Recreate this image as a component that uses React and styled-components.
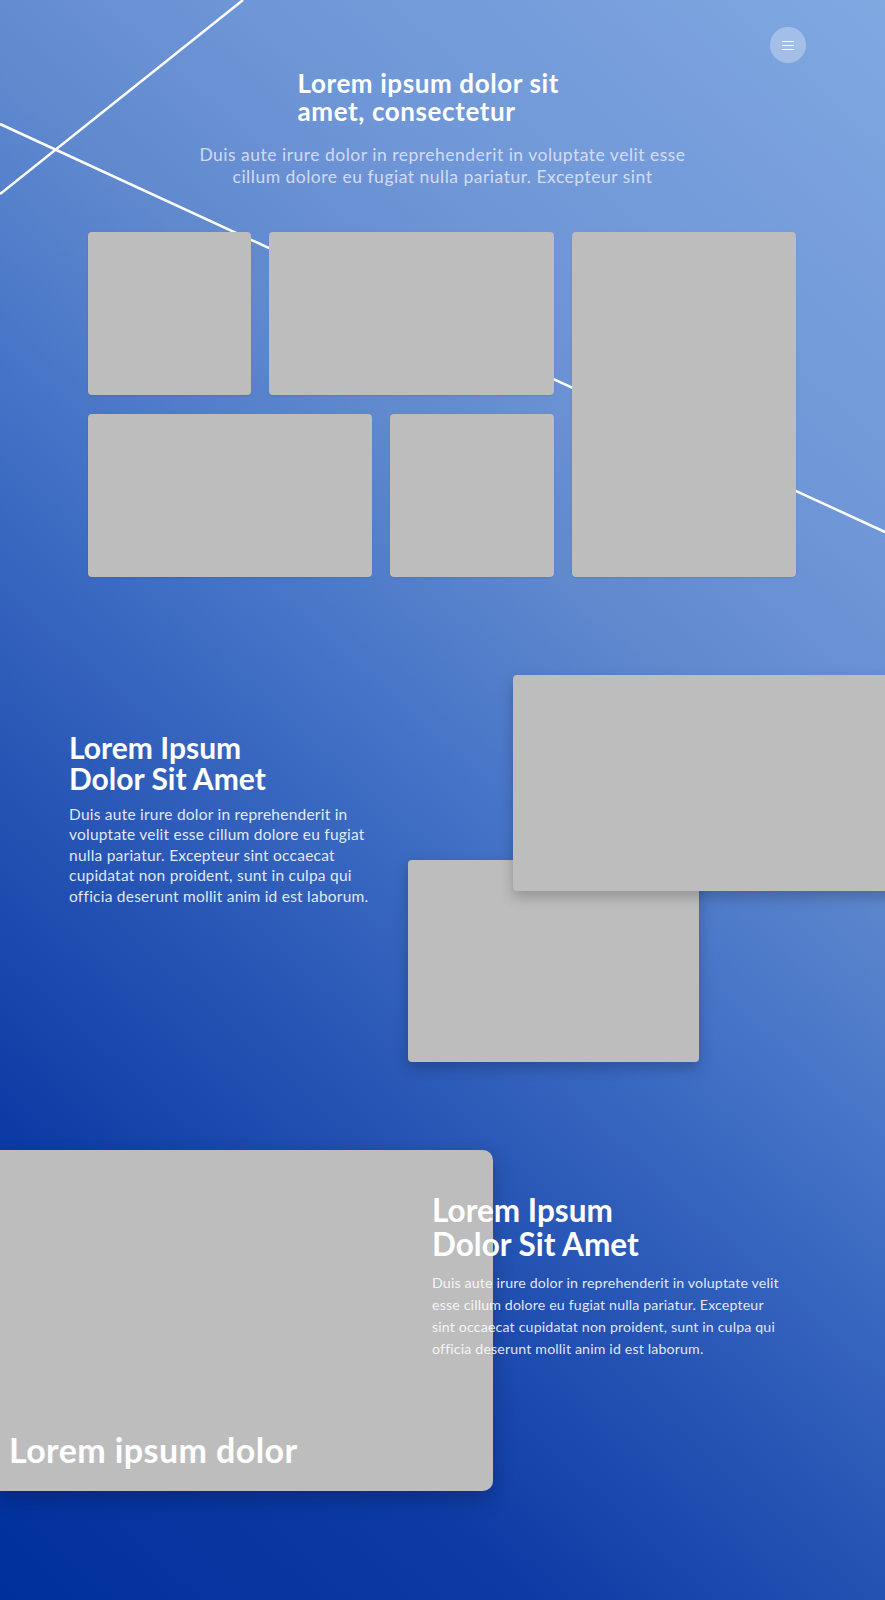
import React from "react";
import styled, { createGlobalStyle } from "styled-components";

const GlobalStyle = createGlobalStyle`
	html, body {
		margin: 0;
		padding: 0;
	}
	body {
		font-family: Lato, "Open Sans", "Liberation Sans", sans-serif;
		color: #fff;
	}
`;

const Page = styled.div`
	position: relative;
	min-height: 1600px;
	overflow: hidden;
	display: flex;
	flex-direction: column;
	background: linear-gradient(
		222deg,
		#80a8e1 0%,
		#6e95d6 25%,
		#6089ce 36%,
		#4271c6 50%,
		#2c5ab8 62%,
		#0c3ba5 80%,
		#00309c 100%
	);
`;

const Lines = styled.svg`
	position: absolute;
	top: 0;
	left: 0;
	z-index: 0;
	pointer-events: none;
`;

const Header = styled.header`
	position: relative;
	z-index: 2;
	display: flex;
	justify-content: flex-end;
	padding: 27px 79px 0 0;
`;

const MenuButton = styled.button`
	width: 36px;
	height: 36px;
	border: none;
	border-radius: 50%;
	background: rgba(255, 255, 255, 0.3);
	display: flex;
	flex-direction: column;
	align-items: center;
	justify-content: center;
	gap: 3px;
	padding: 0;
	cursor: pointer;
`;

const MenuBar = styled.span`
	display: block;
	width: 12px;
	height: 1px;
	background: rgba(255, 255, 255, 0.9);
`;

const Hero = styled.section`
	position: relative;
	z-index: 1;
	margin-top: 6px;
	display: flex;
	flex-direction: column;
	align-items: center;
`;

const HeroTitle = styled.h1`
	width: 290px;
	margin: 0;
	font-size: 26px;
	line-height: 28px;
	font-weight: 700;
	letter-spacing: 0.6px;
	text-align: left;
`;

const HeroSubtitle = styled.p`
	width: 505px;
	margin: 19px 0 0;
	font-size: 17.5px;
	line-height: 21.5px;
	font-weight: 400;
	letter-spacing: 0.5px;
	text-align: center;
	color: rgba(238, 238, 255, 0.8);
`;

const Gallery = styled.div`
	position: relative;
	z-index: 1;
	margin: 45px 0 0 88px;
	display: grid;
	grid-template-columns: 163px 103px 164px 224px;
	grid-template-rows: 163px 163px;
	gap: 19px 18px;
`;

const Tile = styled.div`
	background: #bdbdbd;
	border-radius: 4px;
	grid-column: ${(p) => p.col};
	grid-row: ${(p) => p.row};
	box-shadow: ${(p) =>
		p.raised ? "0 6px 14px rgba(0, 0, 0, 0.22)" : "0 1px 2px rgba(0, 0, 0, 0.08)"};
	z-index: ${(p) => p.layer || 0};
`;

const Feature = styled.section`
	position: relative;
	z-index: 1;
	margin-top: 98px;
	display: flex;
`;

const FeatureText = styled.div`
	flex: 0 0 408px;
	box-sizing: border-box;
	padding: 57px 0 0 69px;
`;

const FeatureTitle = styled.h2`
	margin: 0;
	font-size: ${(p) => p.size || 30}px;
	line-height: ${(p) => p.lh || 31}px;
	font-weight: 700;
	color: #fff;
`;

const FeatureBody = styled.p`
	width: ${(p) => p.width}px;
	margin: ${(p) => p.gap}px 0 0;
	font-size: ${(p) => p.size}px;
	line-height: ${(p) => p.lh}px;
	letter-spacing: ${(p) => p.track}px;
	color: rgba(255, 255, 255, 0.88);
`;

const Stack = styled.div`
	flex: 0 0 auto;
	display: grid;
	grid-template-columns: 105px 186px 200px;
	grid-template-rows: 185px 31px 171px;
`;

const Showcase = styled.section`
	position: relative;
	z-index: 1;
	margin-top: 88px;
	display: grid;
	grid-template-columns: 432px 61px 1fr;
`;

const Banner = styled.div`
	grid-column: 1 / 3;
	grid-row: 1;
	height: 341px;
	background: #bdbdbd;
	border-radius: 0 10px 10px 0;
	box-shadow: 0 8px 20px rgba(0, 0, 0, 0.22);
	display: flex;
	align-items: flex-end;
	padding: 0 0 21px 9px;
	box-sizing: border-box;
`;

const BannerLabel = styled.span`
	font-size: 34px;
	line-height: 40px;
	font-weight: 700;
	letter-spacing: 0.4px;
	color: #fff;
`;

const ShowcaseText = styled.div`
	grid-column: 2 / 4;
	grid-row: 1;
	position: relative;
	z-index: 1;
	padding-top: 44px;
`;

const body =
	"Duis aute irure dolor in reprehenderit in voluptate velit esse cillum dolore eu fugiat nulla pariatur. Excepteur sint occaecat cupidatat non proident, sunt in culpa qui officia deserunt mollit anim id est laborum.";

export default function App() {
	return (
		<>
			<GlobalStyle />
			<Page>
				<Lines width="885" height="600" viewBox="0 0 885 600">
					<line x1="0" y1="194" x2="243" y2="0" stroke="#fff" strokeWidth="2.5" />
					<line x1="0" y1="124" x2="885" y2="532" stroke="#fff" strokeWidth="2.5" />
				</Lines>

				<Header>
					<MenuButton aria-label="Menu">
						<MenuBar />
						<MenuBar />
						<MenuBar />
					</MenuButton>
				</Header>

				<Hero>
					<HeroTitle>Lorem ipsum dolor sit amet, consectetur</HeroTitle>
					<HeroSubtitle>
						Duis aute irure dolor in reprehenderit in voluptate velit esse
						cillum dolore eu fugiat nulla pariatur. Excepteur sint
					</HeroSubtitle>
				</Hero>

				<Gallery>
					<Tile col="1" row="1" />
					<Tile col="2 / 4" row="1" />
					<Tile col="4" row="1 / 3" />
					<Tile col="1 / 3" row="2" />
					<Tile col="3" row="2" />
				</Gallery>

				<Feature>
					<FeatureText>
						<FeatureTitle>
							Lorem Ipsum
							<br />
							Dolor Sit Amet
						</FeatureTitle>
						<FeatureBody width={305} gap={10} size={15.5} lh={20.4} track={0.23}>
							{body}
						</FeatureBody>
					</FeatureText>
					<Stack>
						<Tile col="2 / 4" row="1 / 3" raised layer={2} />
						<Tile col="1 / 3" row="2 / 4" raised layer={1} />
					</Stack>
				</Feature>

				<Showcase>
					<Banner>
						<BannerLabel>Lorem ipsum dolor</BannerLabel>
					</Banner>
					<ShowcaseText>
						<FeatureTitle size={31.5} lh={33.5}>
							Lorem Ipsum
							<br />
							Dolor Sit Amet
						</FeatureTitle>
						<FeatureBody width={352} gap={11} size={14.2} lh={22} track={0.15}>
							{body}
						</FeatureBody>
					</ShowcaseText>
				</Showcase>
			</Page>
		</>
	);
}
